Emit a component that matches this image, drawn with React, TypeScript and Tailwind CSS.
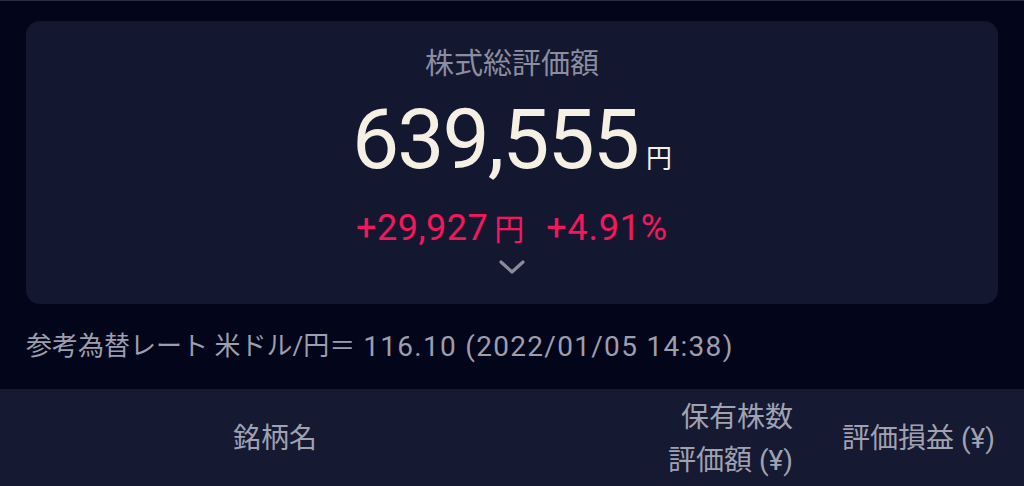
import React from "react";

export default function App() {
  const font = { fontFamily: 'Roboto, "Noto Sans CJK JP", sans-serif' };
  return (
    <div className="w-[1024px] h-[486px] overflow-hidden bg-[#03051a] border-t border-[#2c2e40]" style={font}>
      <div className="px-[26px] pt-[20px]">
        <div className="h-[283px] rounded-[14px] bg-[#141730] flex flex-col items-center pt-[26px]">
          <div className="text-[29px] leading-[34px] text-[#8c8ea0]">株式総評価額</div>
          <div className="mt-[17px] flex items-baseline text-[#f6f0e4]">
            <span className="text-[84px] leading-[84px] tracking-[-2px]">639,555</span>
            <span className="text-[26px] leading-[26px] ml-[8px]">円</span>
          </div>
          <div className="mt-[28px] flex items-baseline text-[#f5175c]">
            <span className="text-[36px] leading-[36px] tracking-[0.5px]">+29,927</span>
            <span className="text-[30px] leading-[30px] ml-[6px]">円</span>
            <span className="text-[36px] leading-[36px] ml-[22px] tracking-[0.8px]">+4.91%</span>
          </div>
          <svg className="mt-[13px]" width="28" height="16" viewBox="0 0 28 16" fill="none">
            <path d="M3 3 L14 13 L25 3" stroke="#8a8c9c" strokeWidth="3.2" strokeLinecap="round" strokeLinejoin="round" />
          </svg>
        </div>
      </div>
      <div className="h-[85px] flex items-center px-[26px] text-[26px] text-[#9c9ead] whitespace-nowrap">
        <span>参考為替レート 米ドル/円＝</span>
        <span className="text-[28px] tracking-[1.3px] ml-[8px]">116.10 (2022/01/05 14:38)</span>
      </div>
      <div className="h-[100px] bg-[#161932] flex items-center text-[28px] text-[#a0a2b1]">
        <div className="w-[550px] text-center">銘柄名</div>
        <div className="w-[243px] text-right leading-[43px]">
          <div>保有株数</div>
          <div>評価額 (¥)</div>
        </div>
        <div className="flex-1 text-right pr-[29px]">評価損益 (¥)</div>
      </div>
    </div>
  );
}
